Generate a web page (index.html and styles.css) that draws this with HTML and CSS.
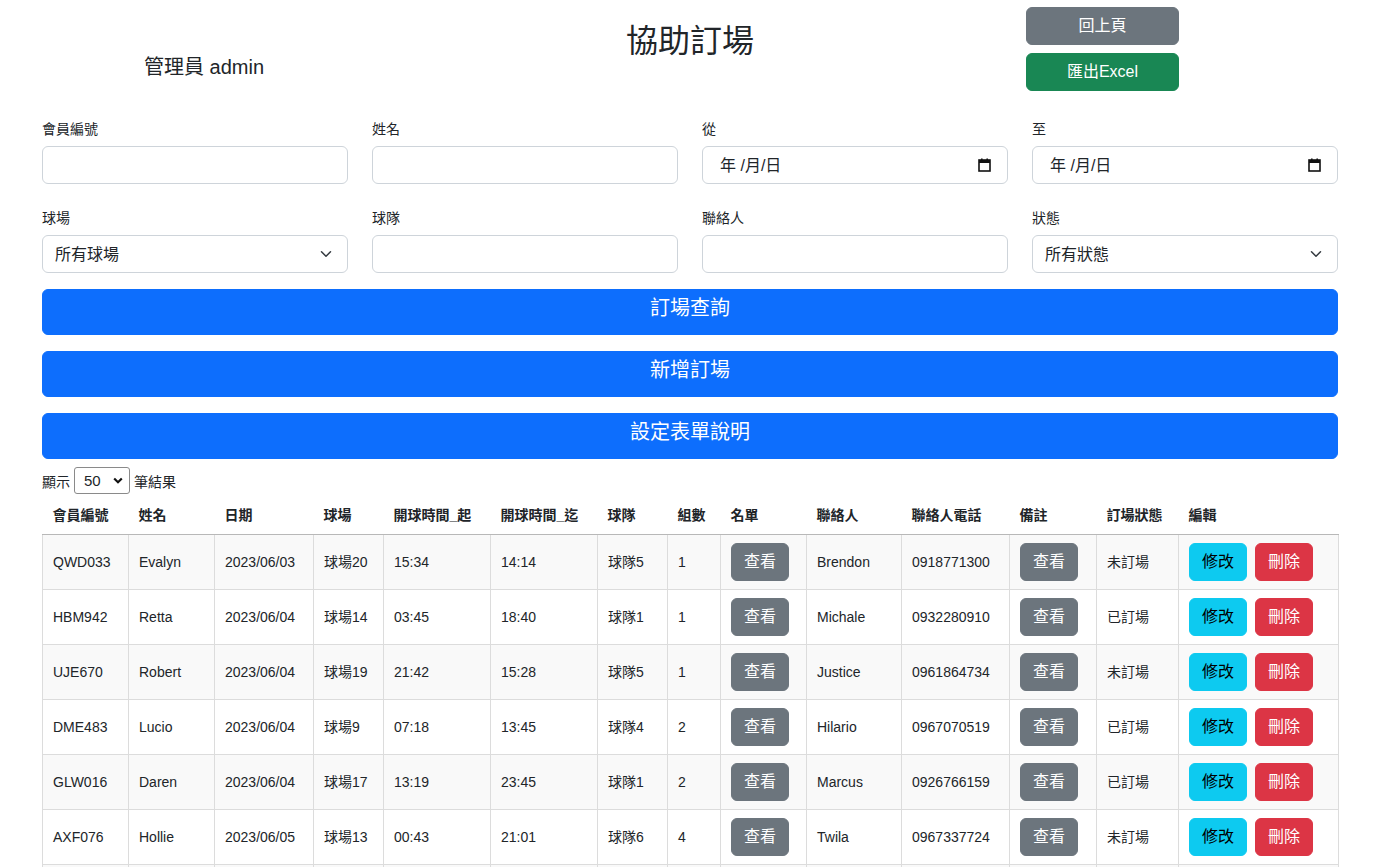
FILE: index.html
```html
<!DOCTYPE html>
<html lang="zh-Hant">
<head>
<meta charset="utf-8">
<title>協助訂場</title>
<link rel="stylesheet" href="styles.css">
</head>
<body>
<div class="page">
  <header class="top">
    <div class="who">管理員 admin</div>
    <h2 class="title">協助訂場</h2>
    <div class="actions">
      <button class="btn btn-gray hbtn">回上頁</button>
      <button class="btn btn-green hbtn">匯出Excel</button>
    </div>
  </header>

  <section class="filters">
    <div class="field">
      <label class="lbl">會員編號</label>
      <div class="ctl"></div>
    </div>
    <div class="field">
      <label class="lbl">姓名</label>
      <div class="ctl"></div>
    </div>
    <div class="field">
      <label class="lbl">從</label>
      <div class="ctl date"><span>年 /月/日</span>
        <svg class="cal" width="13" height="14" viewBox="0 0 13 14"><rect x="1" y="2" width="11" height="11" fill="none" stroke="#111" stroke-width="1.6"/><rect x="1" y="2" width="11" height="3" fill="#111"/><rect x="3" y="0.5" width="1.6" height="2.5" fill="#111"/><rect x="8.4" y="0.5" width="1.6" height="2.5" fill="#111"/></svg>
      </div>
    </div>
    <div class="field">
      <label class="lbl">至</label>
      <div class="ctl date"><span>年 /月/日</span>
        <svg class="cal" width="13" height="14" viewBox="0 0 13 14"><rect x="1" y="2" width="11" height="11" fill="none" stroke="#111" stroke-width="1.6"/><rect x="1" y="2" width="11" height="3" fill="#111"/><rect x="3" y="0.5" width="1.6" height="2.5" fill="#111"/><rect x="8.4" y="0.5" width="1.6" height="2.5" fill="#111"/></svg>
      </div>
    </div>

    <div class="field">
      <label class="lbl">球場</label>
      <div class="ctl sel"><span>所有球場</span>
        <svg width="16" height="12" viewBox="0 0 16 16"><path d="m2 5 6 6 6-6" fill="none" stroke="#343a40" stroke-width="2" stroke-linecap="round" stroke-linejoin="round"/></svg>
      </div>
    </div>
    <div class="field">
      <label class="lbl">球隊</label>
      <div class="ctl"></div>
    </div>
    <div class="field">
      <label class="lbl">聯絡人</label>
      <div class="ctl"></div>
    </div>
    <div class="field">
      <label class="lbl">狀態</label>
      <div class="ctl sel"><span>所有狀態</span>
        <svg width="16" height="12" viewBox="0 0 16 16"><path d="m2 5 6 6 6-6" fill="none" stroke="#343a40" stroke-width="2" stroke-linecap="round" stroke-linejoin="round"/></svg>
      </div>
    </div>
  </section>

  <div class="big-actions">
    <button class="btn btn-blue big">訂場查詢</button>
    <button class="btn btn-blue big">新增訂場</button>
    <button class="btn btn-blue big">設定表單說明</button>
  </div>

  <div class="length">
    <span>顯示</span>
    <div class="mini-sel"><span>50</span>
      <svg width="10" height="7" viewBox="0 0 10 7"><path d="M1.2 1.5 5 5.2 8.8 1.5" fill="none" stroke="#111" stroke-width="2.2"/></svg>
    </div>
    <span>筆結果</span>
  </div>

  <table class="grid">
    <colgroup>
      <col style="width:86px"><col style="width:86px"><col style="width:99px"><col style="width:70px">
      <col style="width:107px"><col style="width:107px"><col style="width:70px"><col style="width:53px">
      <col style="width:86px"><col style="width:95px"><col style="width:108px"><col style="width:87px">
      <col style="width:82px"><col style="width:160px">
    </colgroup>
    <thead>
      <tr>
        <th>會員編號</th><th>姓名</th><th>日期</th><th>球場</th><th>開球時間_起</th><th>開球時間_迄</th><th>球隊</th><th>組數</th><th>名單</th><th>聯絡人</th><th>聯絡人電話</th><th>備註</th><th>訂場狀態</th><th>編輯</th>
      </tr>
    </thead>
    <tbody>
      <tr>
        <td>QWD033</td><td>Evalyn</td><td>2023/06/03</td><td>球場20</td><td>15:34</td><td>14:14</td><td>球隊5</td><td>1</td>
        <td><button class="btn btn-gray sm">查看</button></td><td>Brendon</td><td>0918771300</td>
        <td><button class="btn btn-gray sm">查看</button></td><td>未訂場</td>
        <td><div class="ops"><button class="btn btn-cyan sm">修改</button><button class="btn btn-red sm">刪除</button></div></td>
      </tr>
      <tr>
        <td>HBM942</td><td>Retta</td><td>2023/06/04</td><td>球場14</td><td>03:45</td><td>18:40</td><td>球隊1</td><td>1</td>
        <td><button class="btn btn-gray sm">查看</button></td><td>Michale</td><td>0932280910</td>
        <td><button class="btn btn-gray sm">查看</button></td><td>已訂場</td>
        <td><div class="ops"><button class="btn btn-cyan sm">修改</button><button class="btn btn-red sm">刪除</button></div></td>
      </tr>
      <tr>
        <td>UJE670</td><td>Robert</td><td>2023/06/04</td><td>球場19</td><td>21:42</td><td>15:28</td><td>球隊5</td><td>1</td>
        <td><button class="btn btn-gray sm">查看</button></td><td>Justice</td><td>0961864734</td>
        <td><button class="btn btn-gray sm">查看</button></td><td>未訂場</td>
        <td><div class="ops"><button class="btn btn-cyan sm">修改</button><button class="btn btn-red sm">刪除</button></div></td>
      </tr>
      <tr>
        <td>DME483</td><td>Lucio</td><td>2023/06/04</td><td>球場9</td><td>07:18</td><td>13:45</td><td>球隊4</td><td>2</td>
        <td><button class="btn btn-gray sm">查看</button></td><td>Hilario</td><td>0967070519</td>
        <td><button class="btn btn-gray sm">查看</button></td><td>已訂場</td>
        <td><div class="ops"><button class="btn btn-cyan sm">修改</button><button class="btn btn-red sm">刪除</button></div></td>
      </tr>
      <tr>
        <td>GLW016</td><td>Daren</td><td>2023/06/04</td><td>球場17</td><td>13:19</td><td>23:45</td><td>球隊1</td><td>2</td>
        <td><button class="btn btn-gray sm">查看</button></td><td>Marcus</td><td>0926766159</td>
        <td><button class="btn btn-gray sm">查看</button></td><td>已訂場</td>
        <td><div class="ops"><button class="btn btn-cyan sm">修改</button><button class="btn btn-red sm">刪除</button></div></td>
      </tr>
      <tr>
        <td>AXF076</td><td>Hollie</td><td>2023/06/05</td><td>球場13</td><td>00:43</td><td>21:01</td><td>球隊6</td><td>4</td>
        <td><button class="btn btn-gray sm">查看</button></td><td>Twila</td><td>0967337724</td>
        <td><button class="btn btn-gray sm">查看</button></td><td>未訂場</td>
        <td><div class="ops"><button class="btn btn-cyan sm">修改</button><button class="btn btn-red sm">刪除</button></div></td>
      </tr>
      <tr class="tail">
        <td></td><td></td><td></td><td></td><td></td><td></td><td></td><td></td><td></td><td></td><td></td><td></td><td></td><td></td>
      </tr>
    </tbody>
  </table>
</div>
</body>
</html>
```

FILE: styles.css
```css
* { box-sizing: border-box; }
html, body { margin: 0; padding: 0; }
body {
  font-family: "Liberation Sans", "Noto Sans CJK TC", sans-serif;
  color: #212529;
  background: #fff;
  font-size: 16px;
}
.page {
  width: 1296px;
  margin-left: 42px;
}
.top {
  display: grid;
  grid-template-columns: 324px 648px 324px;
  padding-top: 7px;
}
.who {
  text-align: center;
  font-size: 20px;
  line-height: 24px;
  padding-top: 48px;
}
.title {
  margin: 0;
  text-align: center;
  font-size: 32px;
  font-weight: 400;
  line-height: 38px;
  padding-top: 15px;
}
.actions {
  display: flex;
  flex-direction: column;
  gap: 8px;
  padding-left: 12px;
}
.btn {
  font-family: inherit;
  border: 1px solid transparent;
  border-radius: 6px;
  color: #fff;
  font-size: 16px;
  cursor: pointer;
  padding: 0 12px;
}
.hbtn {
  width: 153px;
  height: 38px;
  line-height: 36px;
}
.btn-gray { background: #6c757d; border-color: #6c757d; }
.btn-green { background: #198754; border-color: #198754; }
.btn-blue { background: #0d6efd; border-color: #0d6efd; }
.btn-cyan { background: #0dcaf0; border-color: #0dcaf0; color: #000; }
.btn-red { background: #dc3545; border-color: #dc3545; }

.filters {
  display: grid;
  grid-template-columns: repeat(4, 306px);
  column-gap: 24px;
  row-gap: 22px;
  margin-top: 26px;
}
.field { display: flex; flex-direction: column; }
.lbl {
  font-size: 14px;
  line-height: 21px;
  padding-top: 2px;
  margin-bottom: 6px;
}
.ctl {
  height: 38px;
  border: 1px solid #ced4da;
  border-radius: 6px;
  background: #fff;
  display: flex;
  align-items: center;
  justify-content: space-between;
  font-size: 16px;
}
.ctl span { padding-bottom: 2px; }
.date { padding: 0 16px 0 17px; }
.sel { padding: 0 13px 0 12px; }
.cal { display: block; }

.big-actions {
  display: flex;
  flex-direction: column;
  gap: 16px;
  margin-top: 16px;
}
.big {
  width: 100%;
  height: 46px;
  font-size: 20px;
  line-height: 30px;
  padding-bottom: 8px;
}

.length {
  display: flex;
  align-items: center;
  gap: 3px;
  font-size: 14px;
  margin-top: 8px;
  height: 27px;
}
.mini-sel {
  width: 56px;
  height: 27px;
  border: 1px solid #8a8a8a;
  border-radius: 3px;
  display: flex;
  align-items: center;
  justify-content: space-between;
  padding: 0 6px 0 9px;
  font-size: 15px;
  margin: 0 1px;
}

.grid {
  width: 1296px;
  border-collapse: collapse;
  table-layout: fixed;
  margin-top: 4px;
  font-size: 14px;
}
.grid th {
  text-align: left;
  font-weight: 700;
  padding: 7px 10px 8px;
  line-height: 21px;
  border-bottom: 1px solid #b8b8b8;
}
.grid td {
  border: 1px solid #dcdcdc;
  padding: 8px 10px;
  height: 55px;
  line-height: 21px;
  vertical-align: middle;
  white-space: nowrap;
}
.grid tbody tr:nth-child(odd) td { background: #f9f9f9; }
.sm {
  height: 38px;
  line-height: 36px;
  padding: 0 12px;
}
.ops { display: flex; gap: 8px; }
```
